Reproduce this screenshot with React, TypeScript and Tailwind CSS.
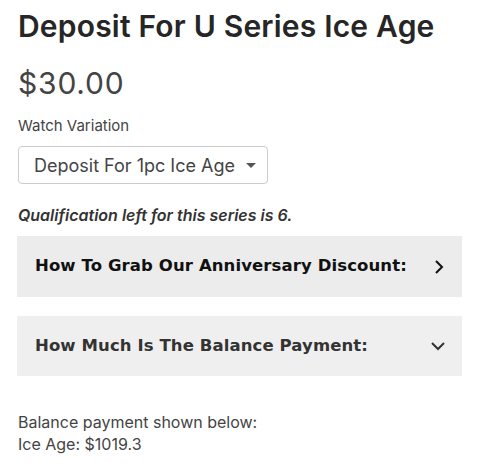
import React from "react";

export default function App() {
  return (
    <div className="w-[480px] h-[466px] bg-white overflow-hidden px-[18px] pt-[6px]" style={{ fontFamily: "Inter, 'Noto Sans', sans-serif" }}>
      <h1 className="text-[30px] font-semibold leading-[40px] text-[#262626] tracking-[0.2px]">Deposit For U Series Ice Age</h1>
      <div className="mt-[20px] text-[30px] leading-[34px] text-[#444] font-normal tracking-[0.8px]">$30.00</div>
      <div className="mt-[17px] text-[15px] leading-[18px] text-[#444]">Watch Variation</div>
      <div className="mt-[11px] w-[250px] h-[38px] border border-[#ccc] rounded-[4px] flex items-center justify-between pl-[15px] pr-[10px] text-[18px] text-[#444]">
        <span>Deposit For 1pc Ice Age</span>
        <svg width="12" height="7" viewBox="0 0 12 7"><path d="M1 1 L6 6 L11 1 Z" fill="#555" /></svg>
      </div>
      <div className="mt-[21px] text-[16px] leading-[20px] italic font-semibold text-[#333]">Qualification left for this series is 6.</div>
      <div className="mt-[11px] w-[445px] -ml-px h-[61px] bg-[#ececec] flex items-center justify-between pl-[18px] pr-[18px]" style={{ fontFamily: "'DejaVu Sans', sans-serif" }}>
        <span className="text-[16.5px] font-bold text-[#111] tracking-[0.1px]">How To Grab Our Anniversary Discount:</span>
        <svg width="10" height="16" viewBox="0 0 10 16" fill="none" stroke="#111" strokeWidth="2"><path d="M2 2 L8 8 L2 14" /></svg>
      </div>
      <div className="mt-[19px] w-[445px] -ml-px h-[60px] bg-[#efefef] flex items-center justify-between pl-[18px] pr-[16px]" style={{ fontFamily: "'DejaVu Sans', sans-serif" }}>
        <span className="text-[16.5px] font-bold text-[#333] tracking-[0.1px]">How Much Is The Balance Payment:</span>
        <svg width="16" height="10" viewBox="0 0 16 10" fill="none" stroke="#333" strokeWidth="2"><path d="M2 2 L8 8 L14 2" /></svg>
      </div>
      <div className="mt-[35px] text-[16px] leading-[22px] text-[#444]">
        <div>Balance payment shown below:</div>
        <div>Ice Age: $1019.3</div>
      </div>
    </div>
  );
}
